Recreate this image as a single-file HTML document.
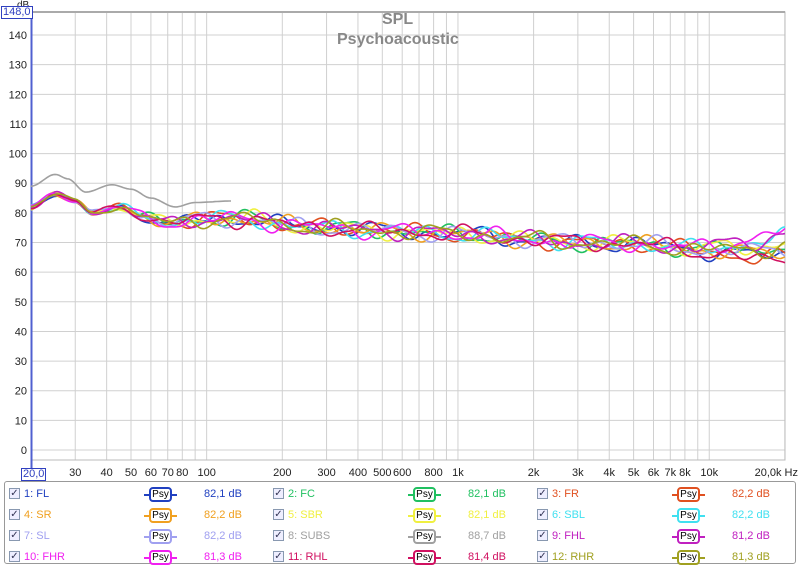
<!DOCTYPE html>
<html><head><meta charset="utf-8"><style>
body{margin:0;width:800px;height:567px;background:#fff;font-family:"Liberation Sans",sans-serif;overflow:hidden;position:relative}
.t{position:absolute;font-size:11px;color:#222}
#leg{position:absolute;left:4px;top:481px;width:792px;height:83px;border:1px solid #999;border-radius:3px;box-sizing:border-box}
.it{position:absolute;font-size:11px;height:14px;line-height:14px}
.cb{position:absolute;width:11px;height:11px;border:1px solid #8898b0;background:#eef;box-sizing:border-box;font-size:10px;line-height:9px;text-align:center;color:#335}
.psy{position:absolute;width:23px;height:15px;border:2px solid;border-radius:4px;box-sizing:border-box;font-size:10px;line-height:11px;text-align:center;color:#000;background:#fff}
.psy:before,.psy:after{content:"";position:absolute;top:5px;width:5px;height:1.5px;background:currentColor}
.psy:before{left:-7px}.psy:after{right:-7px}
</style></head><body>
<svg id="g" width="800" height="480" style="position:absolute;left:0;top:0"></svg>
<div class="t" style="left:382px;top:11px;font-size:16px;font-weight:bold;color:#888">SPL</div>
<div class="t" style="left:337px;top:31px;font-size:16px;font-weight:bold;color:#888">Psychoacoustic</div>
<div class="t" style="left:17px;top:0px;font-size:10px">dB</div>
<div class="t" style="left:1px;top:6px;border:1px solid #3040c0;color:#3040c0;background:#fff;padding:0 1px;line-height:11px">148,0</div>
<div class="t" style="left:21px;top:468px;border:1px solid #3040c0;color:#3040c0;background:#fff;padding:0 1px;line-height:11px">20,0</div>
<div id="leg"></div>
<script>
var s=document.getElementById('g'),h='';
function X(f){return 31+Math.log10(f/20)*251.3}
function Y(d){return 450-d*2.964}
var c='#d0d0d0';
for(var d=0;d<=140;d+=10)h+='<line x1="31" x2="785" y1="'+Y(d)+'" y2="'+Y(d)+'" stroke="'+c+'"/>';
var fs=[];for(var m=1;m<=1000;m*=10)for(var k=(m==1?3:1);k<=(m==1000?2:9);k++)fs.push(k*10*m);
fs.forEach(function(f){h+='<line y1="12" y2="460" x1="'+X(f)+'" x2="'+X(f)+'" stroke="'+c+'"/>'});
h+='<rect x="31" y="12" width="754" height="448" fill="none" stroke="#bbb"/>';
h+='<line x1="31" x2="785" y1="12" y2="12" stroke="#aaa" stroke-width="2"/>';
h+='<line x1="31.5" x2="31.5" y1="12" y2="472" stroke="#5060d0" stroke-width="2"/>';
var L='';for(d=0;d<=140;d+=10)L+='<text x="27" y="'+(Y(d)+4)+'" text-anchor="end" font-size="11" fill="#222">'+d+'</text>';
[[30,'30'],[40,'40'],[50,'50'],[60,'60'],[70,'70'],[80,'80'],[100,'100'],[200,'200'],[300,'300'],[400,'400'],[500,'500'],[600,'600'],[800,'800'],[1000,'1k'],[2000,'2k'],[3000,'3k'],[4000,'4k'],[5000,'5k'],[6000,'6k'],[7000,'7k'],[8000,'8k'],[10000,'10k']].forEach(function(a){L+='<text x="'+X(a[0])+'" y="476" text-anchor="middle" font-size="11" fill="#222">'+a[1]+'</text>'});
L+='<text x="798" y="476" text-anchor="end" font-size="11" fill="#222">20,0k Hz</text>';
var base=[[20,82],[25,86.5],[30,84],[35,80],[45,82],[55,79],[70,76.5],[100,78],[150,78],[200,76],[300,75],[500,74],[1000,73],[2000,71],[3000,70],[5000,69.5],[10000,67.5],[15000,67],[20000,68]];
function bv(f){var l=Math.log10(f);for(var i=0;i<base.length-1;i++){var a=Math.log10(base[i][0]),b=Math.log10(base[i+1][0]);if(l<=b){var t=(l-a)/(b-a);return base[i][1]+(base[i+1][1]-base[i][1])*(t*t*(3-2*t))}}return 68}
var cols=['#2040c0','#20c060','#e05020','#f0a020','#f0f040','#40e0f0','#a0a0f0','#c020c0','#f020f0','#d01060','#a0a020'];
var ends=[66,69,65,67,70,72,68,73,74,64,69];
cols.forEach(function(col,i){var p=[];for(var x=31;x<=785;x+=2){var f=20*Math.pow(10,(x-31)/251.3);var l=Math.log10(f);var e=Math.max(0,(l-3.9)/0.4);var w=l>2?1:Math.max(0.3,(l-1.4)/0.6);var v=bv(f)+w*(1.6*Math.sin(l*17+i*2.1)+1.2*Math.sin(l*31+i*3.7)+0.8*Math.sin(l*53+i*1.3))+e*(ends[i]-68);p.push(x+','+Y(v).toFixed(1))}h+='<polyline fill="none" stroke="'+col+'" stroke-width="1.6" points="'+p.join(' ')+'"/>'});
var sb=[[20,89],[25,93],[28,91.5],[33,87],[42,89.5],[50,88],[60,85],[75,82],[90,83.5],[125,84]],p=[];
for(var x=31;x<=X(125);x+=2){var f=20*Math.pow(10,(x-31)/251.3),l=Math.log10(f),v=84;for(var j=0;j<sb.length-1;j++){var a=Math.log10(sb[j][0]),b=Math.log10(sb[j+1][0]);if(l<=b){var t=(l-a)/(b-a);v=sb[j][1]+(sb[j+1][1]-sb[j][1])*(t*t*(3-2*t));break}}p.push(x+','+Y(v).toFixed(1))}
h+='<polyline fill="none" stroke="#a0a0a0" stroke-width="1.6" points="'+p.join(' ')+'"/>';
s.innerHTML=h+L;
var it=[['1: FL','#2040c0','82,1 dB'],['2: FC','#20c060','82,1 dB'],['3: FR','#e05020','82,2 dB'],['4: SR','#f0a020','82,2 dB'],['5: SBR','#f0f040','82,1 dB'],['6: SBL','#40e0f0','82,2 dB'],['7: SL','#a0a0f0','82,2 dB'],['8: SUBS','#a0a0a0','88,7 dB'],['9: FHL','#c020c0','81,2 dB'],['10: FHR','#f020f0','81,3 dB'],['11: RHL','#d01060','81,4 dB'],['12: RHR','#a0a020','81,3 dB']];
var g='';it.forEach(function(a,i){var r=Math.floor(i/3),c=i%3,ox=c*264,oy=5+r*21;
g+='<div class="cb" style="left:'+(4+ox)+'px;top:'+(oy+1)+'px">&#10003;</div>';
g+='<div class="it" style="left:'+(19+ox)+'px;top:'+oy+'px;color:'+a[1]+'">'+a[0]+'</div>';
g+='<div class="psy" style="left:'+(144+ox)+'px;top:'+oy+'px;border-color:'+a[1]+';color:'+a[1]+'"><span style="color:#000">Psy</span></div>';
g+='<div class="it" style="left:'+(199+ox)+'px;top:'+oy+'px;color:'+a[1]+'">'+a[2]+'</div>'});
document.getElementById('leg').innerHTML=g;
</script>
</body></html>
